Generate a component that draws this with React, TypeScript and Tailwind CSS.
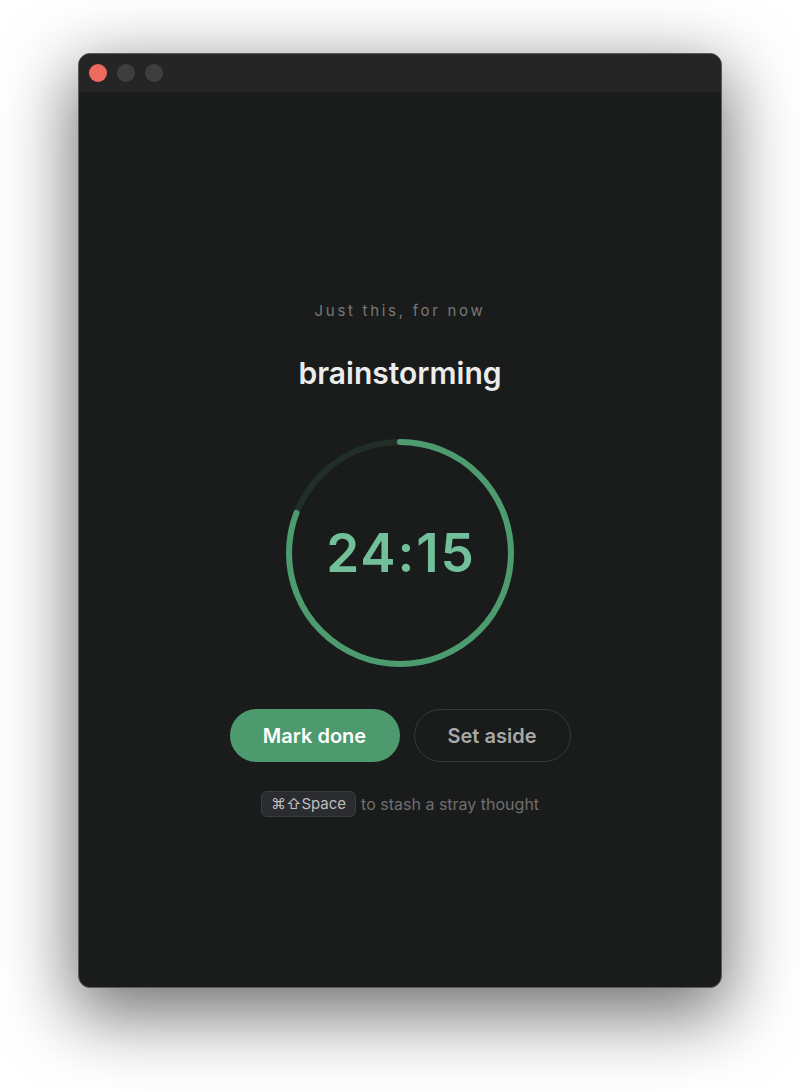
import React from "react";

const R = 111;
const C = 2 * Math.PI * R;
const progress = 0.808;

function Ring() {
  return (
    <svg width="228" height="228" viewBox="0 0 228 228" className="absolute inset-0">
      <circle cx="114" cy="114" r={R} fill="none" stroke="#222f29" strokeWidth="6" />
      <circle
        cx="114"
        cy="114"
        r={R}
        fill="none"
        stroke="#4d9c70"
        strokeWidth="6"
        strokeLinecap="round"
        strokeDasharray={`${C * progress} ${C}`}
        transform="rotate(-90 114 114)"
      />
    </svg>
  );
}

export default function App() {
  return (
    <div
      className="w-[800px] h-[1091px] bg-white pt-[53px] pl-[78px]"
      style={{ fontFamily: "Inter, 'Noto Sans', sans-serif" }}
    >
      <div className="w-[644px] h-[935px] rounded-[12px] border border-[#5a5a5a] bg-[#1a1c1b] overflow-hidden flex flex-col shadow-[0_22px_70px_6px_rgba(0,0,0,0.55)]">
        {/* Title bar */}
        <div className="h-[38px] bg-[#252525] flex items-center gap-[10px] pl-[10px] shrink-0">
          <div className="w-[18px] h-[18px] rounded-full bg-[#ed6a5e]" />
          <div className="w-[18px] h-[18px] rounded-full bg-[#3e3e3e]" />
          <div className="w-[18px] h-[18px] rounded-full bg-[#3e3e3e]" />
        </div>

        {/* Body */}
        <div className="flex flex-col items-center pt-[209px]">
          <p className="text-[15px] leading-[20px] tracking-[0.18em] text-[#777777]">Just this, for now</p>
          <h1 className="mt-[34px] text-[30px] leading-[36px] font-semibold text-[#ececec]">brainstorming</h1>

          <div className="relative mt-[48px] w-[228px] h-[228px] flex items-center justify-center">
            <Ring />
            <span className="relative text-[53px] leading-none font-semibold text-[#72c09a] tracking-[0.035em] pl-[0.035em]">
              24:15
            </span>
          </div>

          <div className="mt-[42px] flex gap-[14px]">
            <button className="w-[170px] h-[53px] rounded-full bg-[#4c9a6e] text-white text-[20px] font-semibold">
              Mark done
            </button>
            <button className="w-[157px] h-[53px] rounded-full border border-[#383a3a] text-[#a8a8a8] text-[20px] font-semibold">
              Set aside
            </button>
          </div>

          <div className="mt-[29px] flex items-center gap-[5px]">
            <span className="h-[26px] px-[9px] flex items-center rounded-[6px] bg-[#2a2c30] border border-[#393c40] text-[15px] text-[#bdbdbd]">
              ⌘⇧Space
            </span>
            <span className="text-[16px] text-[#6f6f6f]">to stash a stray thought</span>
          </div>
        </div>
      </div>
    </div>
  );
}
